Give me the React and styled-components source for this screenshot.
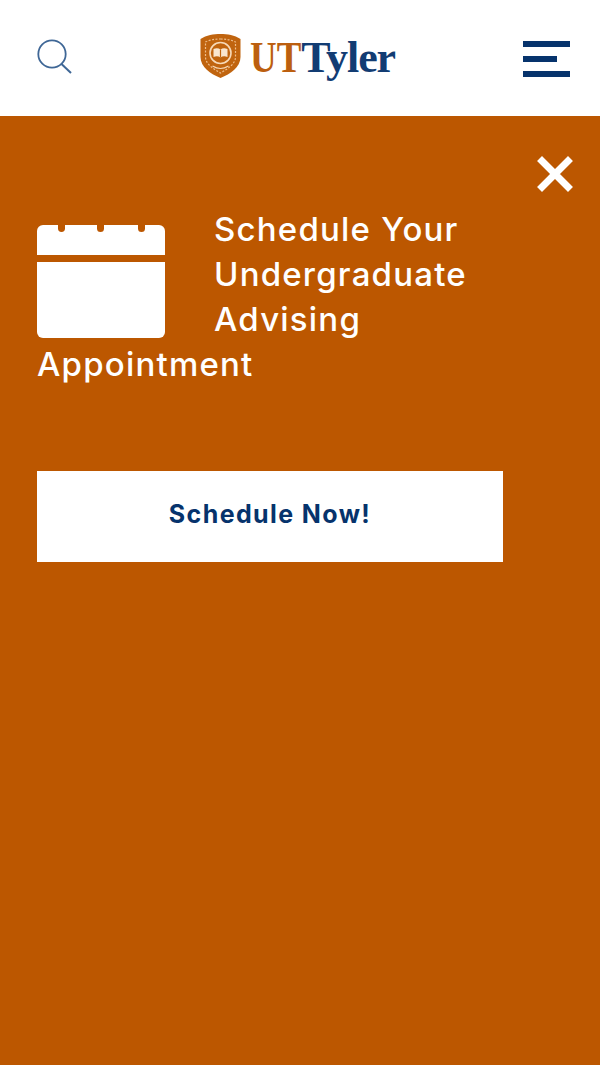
import React from 'react'
import styled, { createGlobalStyle } from 'styled-components'

const GlobalStyle = createGlobalStyle`
  html, body {
    margin: 0;
    padding: 0;
    background: #bc5700;
    font-family: Inter, "Liberation Sans", sans-serif;
  }
`

const Page = styled.div`
  width: 600px;
  height: 1065px;
  display: flex;
  flex-direction: column;
  overflow: hidden;
`

const Header = styled.header`
  height: 116px;
  flex-shrink: 0;
  background: #fff;
  display: flex;
  align-items: center;
  justify-content: space-between;
  padding: 0 30px 0 37px;
  box-sizing: border-box;
`

const SearchButton = styled.div`
  width: 35px;
  height: 35px;
  margin-bottom: 3px;
  color: #3f6796;
`

const Logo = styled.div`
  display: flex;
  align-items: center;
  gap: 9px;
  margin-top: -5px;
`

const Wordmark = styled.div`
  font-family: "Liberation Serif", serif;
  font-weight: 700;
  font-size: 44px;
  line-height: 44px;
  color: #bc5f0f;
  margin-top: 4px;
  white-space: nowrap;
`

const Ut = styled.span`
  display: inline-block;
  transform: scaleX(0.84);
  transform-origin: left center;
  margin-right: -10px;
`

const Tyler = styled.span`
  color: #123c73;
  letter-spacing: -1.1px;
`

const Burger = styled.div`
  width: 47px;
  margin-top: 2px;
  display: flex;
  flex-direction: column;
  gap: 9px;
`

const BurgerLine = styled.div`
  height: 6px;
  width: ${(p) => p.$width}px;
  background: #06336c;
`

const Panel = styled.main`
  position: relative;
  flex: 1;
  background: #bc5700;
  padding: 91px 37px 0;
`

const CloseButton = styled.div`
  position: absolute;
  top: 38px;
  right: 25px;
  width: 40px;
  height: 40px;
`

const Heading = styled.h2`
  margin: 0;
  width: 440px;
  min-height: 180px;
  font-family: Inter, "Liberation Sans", sans-serif;
  font-weight: 500;
  font-size: 33px;
  line-height: 45px;
  letter-spacing: 1.2px;
  color: #fff;
`

const CalendarWrap = styled.span`
  float: left;
  width: 128px;
  height: 113px;
  margin: 18px 49px 0 0;
`

const ScheduleButton = styled.div`
  width: 466px;
  height: 91px;
  margin-top: 84px;
  background: #fff;
  color: #06336c;
  display: flex;
  align-items: center;
  justify-content: center;
  padding-bottom: 6px;
  box-sizing: border-box;
  font-size: 25px;
  font-weight: 700;
  letter-spacing: 1.4px;
`

const SearchIcon = () => (
  <svg width="35" height="35" viewBox="0 0 35 35" fill="none" stroke="currentColor">
    <circle cx="15" cy="15" r="13.7" strokeWidth="1.8" />
    <path d="M24.5 25 L34 34" strokeWidth="2" />
  </svg>
)

const Shield = () => (
  <svg width="41" height="44" viewBox="0 0 40 44">
    <path d="M20 0 C27 0 34 1 40 5 L40 23 C40 33 30 40 20 44 C10 40 0 33 0 23 L0 5 C6 1 13 0 20 0 Z" fill="#c0640f" />
    <path d="M20 5 C26 5 31 6 35 8 L35 23 C35 30 27 35 20 39 C13 35 5 30 5 23 L5 8 C9 6 14 5 20 5 Z" fill="none" stroke="#eebd8a" strokeWidth="1.2" strokeDasharray="2 1.5" />
    <circle cx="20" cy="19" r="10.5" fill="none" stroke="#f6d9b8" strokeWidth="1.6" />
    <path d="M13 15 C15.5 14 18 14 20 15.5 C22 14 24.5 14 27 15 L27 23 C24.5 22 22 22 20 23.5 C18 22 15.5 22 13 23 Z" fill="#f9e6cf" />
    <path d="M20 15.5 L20 23.5" stroke="#c0640f" strokeWidth="1.2" />
    <path d="M12 32 Q20 37 28 32" fill="none" stroke="#f6d9b8" strokeWidth="1.2" />
  </svg>
)

const CloseIcon = () => (
  <svg width="40" height="40" viewBox="0 0 40 40" stroke="#fff" strokeWidth="7" strokeLinecap="square">
    <path d="M7 7 L33 33 M33 7 L7 33" />
  </svg>
)

const CalendarIcon = () => (
  <svg width="128" height="113" viewBox="0 0 128 113" fill="#fff">
    <path d="M6 0 H21 V3.5 a3.5 3.5 0 0 0 7 0 V0 H60 V3.5 a3.5 3.5 0 0 0 7 0 V0 H101 V3.5 a3.5 3.5 0 0 0 7 0 V0 H122 a6 6 0 0 1 6 6 V30 H0 V6 a6 6 0 0 1 6 -6 Z" />
    <path d="M0 37 H128 V107 a6 6 0 0 1 -6 6 H6 a6 6 0 0 1 -6 -6 Z" />
  </svg>
)

const App = () => {
  return (
    <>
      <GlobalStyle />
      <Page>
        <Header>
          <SearchButton>
            <SearchIcon />
          </SearchButton>
          <Logo>
            <Shield />
            <Wordmark><Ut>UT</Ut><Tyler>Tyler</Tyler></Wordmark>
          </Logo>
          <Burger>
            <BurgerLine $width={47} />
            <BurgerLine $width={34} />
            <BurgerLine $width={47} />
          </Burger>
        </Header>
        <Panel>
          <CloseButton>
            <CloseIcon />
          </CloseButton>
          <Heading>
            <CalendarWrap>
              <CalendarIcon />
            </CalendarWrap>
            Schedule Your Undergraduate Advising Appointment
          </Heading>
          <ScheduleButton>Schedule Now!</ScheduleButton>
        </Panel>
      </Page>
    </>
  )
}

export default App
